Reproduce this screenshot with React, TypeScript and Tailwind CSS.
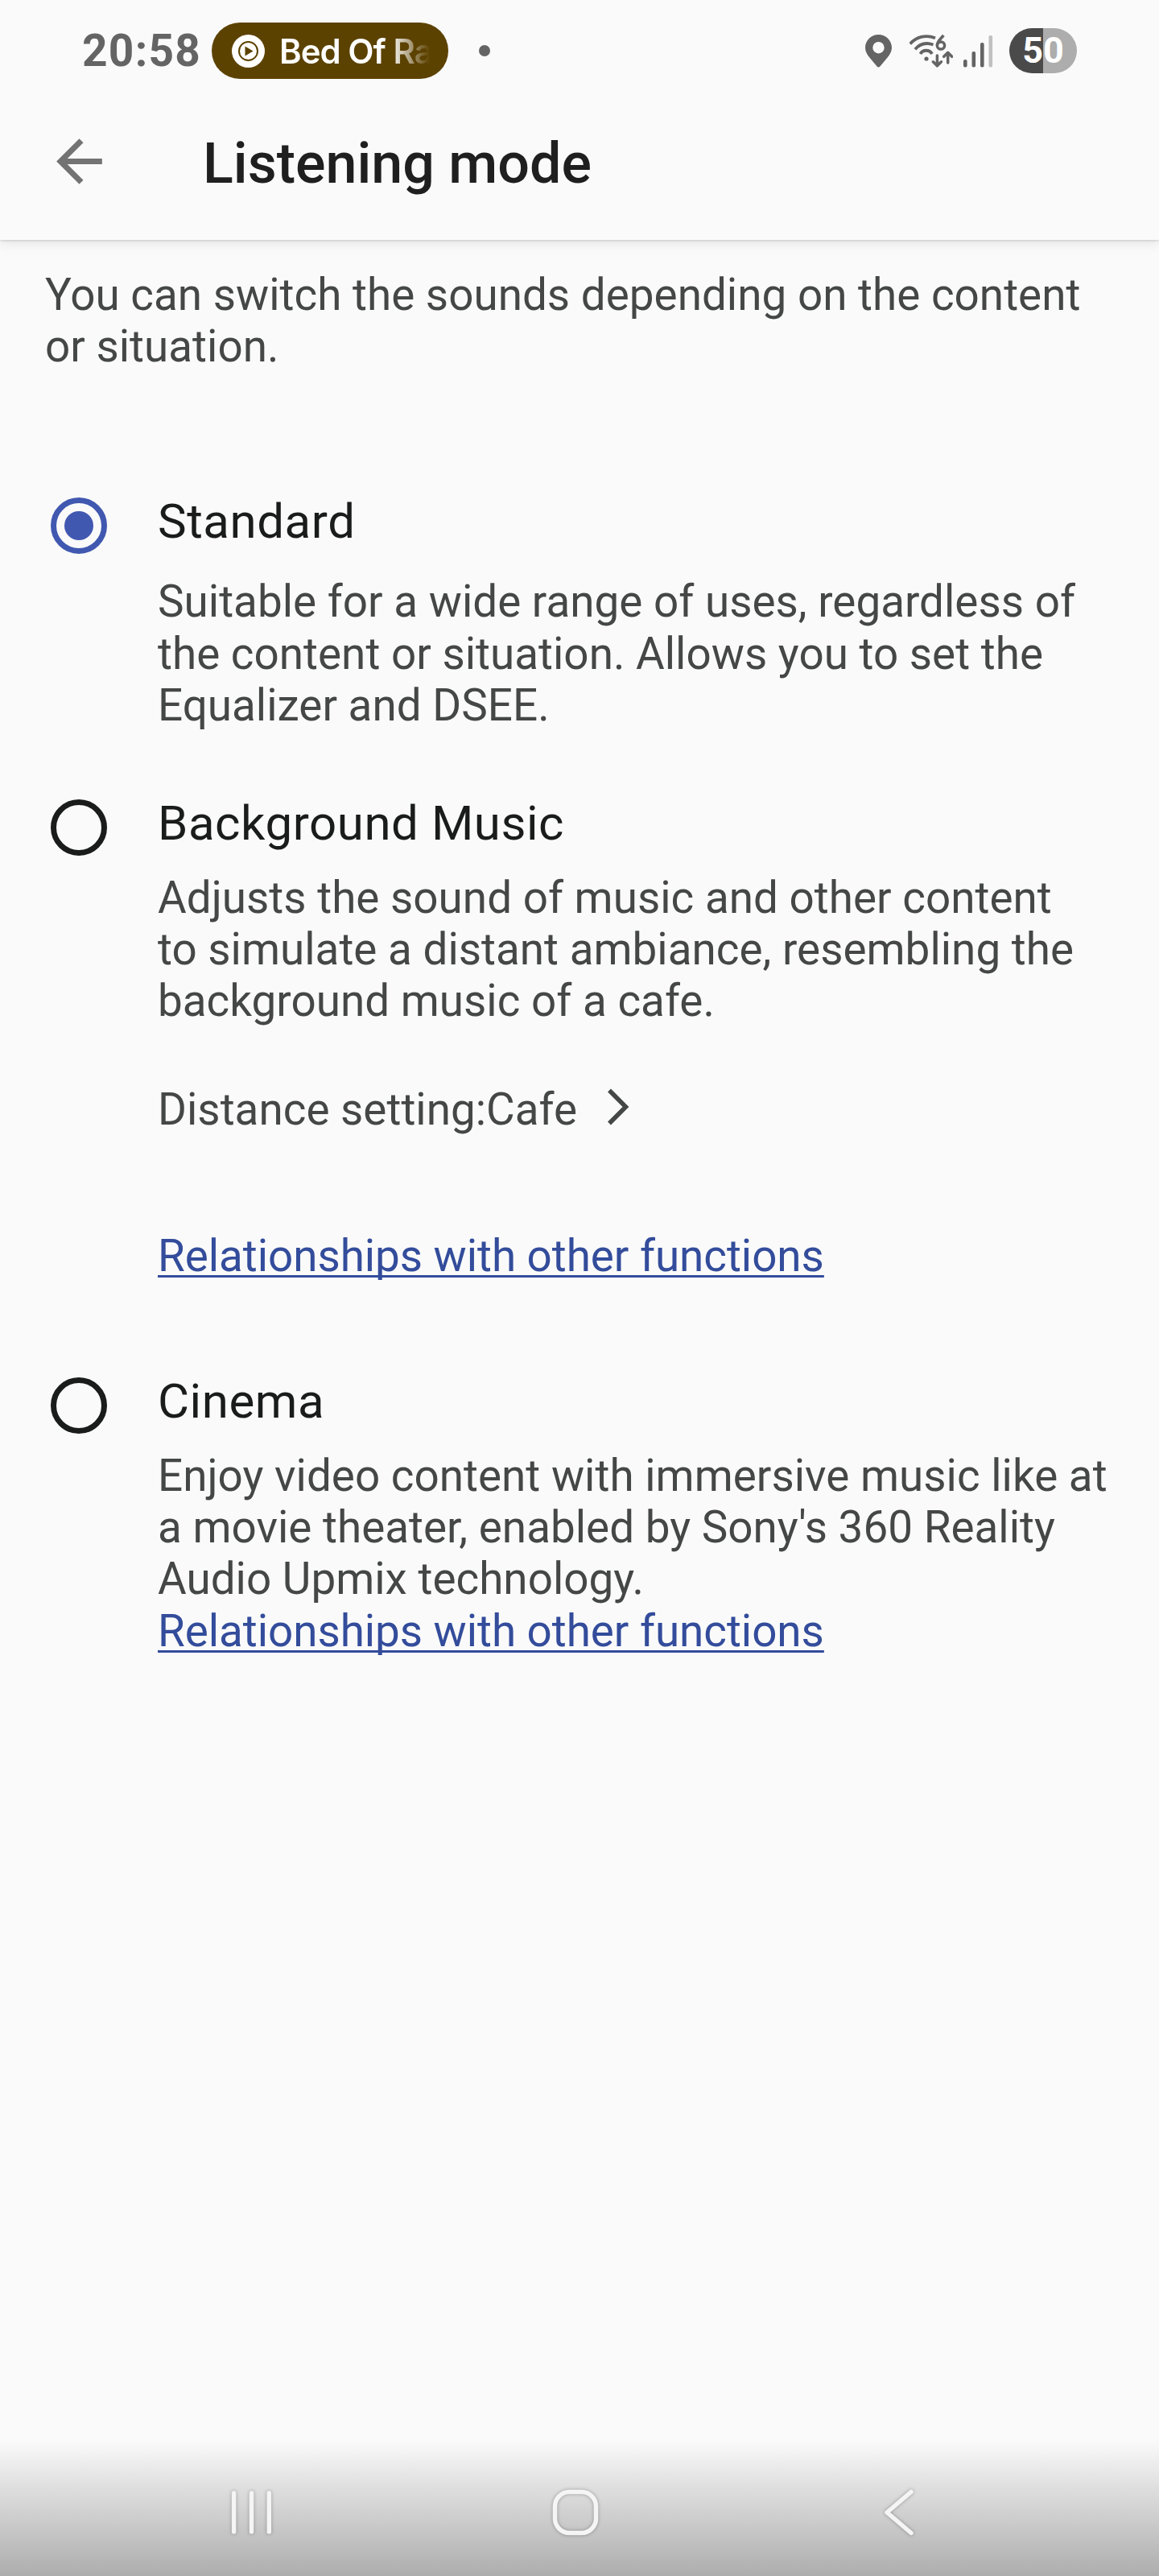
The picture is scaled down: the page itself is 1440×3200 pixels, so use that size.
import type { ReactNode } from "react";
import clsx from "clsx";

const StatusBar = () => {
  return (
    <div className="relative z-10 flex h-[126px] items-center bg-[#fafafa] pl-[102px] pr-[102px] font-['Inter',sans-serif]">
      <span className="w-[161px] whitespace-nowrap font-['Roboto',sans-serif] text-[55px] font-bold leading-none tracking-[1.3px] text-[#646464]">
        20:58
      </span>

      {/* Now playing chip */}
      <div className="flex h-[70px] w-[294px] items-center rounded-full bg-[#5c4200] pl-[25px]">
        <svg className="h-[41px] w-[41px] shrink-0" viewBox="0 0 41 41">
          <circle cx="20.5" cy="20.5" r="20.5" fill="#fff" />
          <circle cx="20.5" cy="20.5" r="11.5" fill="none" stroke="#5c4200" strokeWidth="2" />
          <path d="M16.5 14.5v12l10-6z" fill="#5c4200" />
        </svg>
        <span className="ml-[18px] whitespace-nowrap bg-linear-to-r from-white from-[72%] to-transparent to-[98%] bg-clip-text text-[42px] font-semibold tracking-[-1px] text-transparent">
          Bed Of Ra
        </span>
      </div>

      <div className="ml-[38px] h-[14px] w-[14px] rounded-full bg-[#646464]" />

      <div className="ml-auto flex items-center">
        <svg className="h-[41px] w-[33px]" viewBox="0 0 33 41">
          <path
            fillRule="evenodd"
            fill="#646464"
            d="M16.5 0C7.4 0 0 7.2 0 16.3c0 4.7 2.2 8.2 5.2 12L14.6 39.5c1 1.2 2.8 1.2 3.8 0L27.8 28.3c3-3.8 5.2-7.3 5.2-12C33 7.2 25.6 0 16.5 0Zm0 9a7.2 7.2 0 1 1 0 14.4 7.2 7.2 0 0 1 0-14.4Z"
          />
        </svg>

        <svg
          className="ml-[22px] h-[42px] w-[54px]"
          viewBox="0 0 54 42"
          fill="none"
          stroke="#646464"
          strokeWidth="3.8"
          strokeLinejoin="round"
        >
          <path d="M.8 12.6C8 4 20 .5 32 5.2" />
          <path d="M7 19.2C13 12 21 10.5 29.5 13.5" />
          <path d="M13.5 25C16.5 19.3 25 19.3 28 25" />
          <circle cx="21" cy="31" r="2.6" fill="#646464" stroke="none" />
          <path d="M42.3 1.8C39 6 34.4 9.5 34.4 14" strokeWidth="3.5" />
          <circle cx="39" cy="14.5" r="4.6" strokeWidth="3.5" />
          <path d="M34.4 27v12.5M29.4 34.8l5 5 5-5" strokeWidth="3.5" strokeLinecap="round" />
          <path d="M47.7 36V23.5M42.7 28.3l5-5 5 5" strokeWidth="3.5" strokeLinecap="round" />
        </svg>

        <svg className="ml-[13px] h-[41px] w-[37px]" viewBox="0 0 37 41">
          <rect x="0" y="31" width="4.6" height="9.5" rx="2" fill="#646464" />
          <rect x="10.5" y="21" width="4.6" height="19.5" rx="2" fill="#646464" />
          <rect x="21" y="10" width="4.6" height="30.5" rx="2" fill="#646464" />
          <rect x="31.5" y="1" width="4.6" height="39.5" rx="2" fill="#c0c0c0" />
        </svg>

        <div className="ml-[20px] flex h-[56px] w-[84px] items-center justify-center rounded-full bg-linear-to-r from-[#4a4a4a] from-50% to-[#adadad] to-50% font-['Roboto',sans-serif] text-[45px] font-bold text-white">
          50
        </div>
      </div>
    </div>
  );
};

const Header = () => {
  return (
    <header className="flex h-[172px] items-center pb-[23px] shadow-[0_1px_3px_rgba(0,0,0,0.16),0_5px_14px_rgba(0,0,0,0.08)]">
      <svg className="ml-[56px] h-[85px] w-[85px]" viewBox="0 0 24 24" fill="#737373">
        <path d="M20 11H7.83l5.59-5.59L12 4l-8 8 8 8 1.41-1.41L7.83 13H20v-2z" />
      </svg>
      <h1 className="ml-[111px] pt-[5px] text-[70px] font-medium leading-[82px] text-[#1f1f1f]">Listening mode</h1>
    </header>
  );
};

const Radio = ({ checked }: { checked?: boolean }) => {
  return (
    <div
      className={clsx(
        "mt-[5px] flex h-[70px] w-[70px] shrink-0 items-center justify-center rounded-full border-[7px]",
        checked ? "border-[#4058b0]" : "border-[#1a1c1c]"
      )}
    >
      {checked && <div className="h-[36px] w-[36px] rounded-full bg-[#4058b0]" />}
    </div>
  );
};

type OptionProps = {
  label: string;
  checked?: boolean;
  className?: string;
  children: ReactNode;
};

const Option = ({ label, checked, className, children }: OptionProps) => {
  return (
    <div className={clsx("flex pl-[63px]", className)}>
      <Radio checked={checked} />
      <div className="ml-[63px] whitespace-nowrap">
        <h2 className="text-[60px] leading-[70px] tracking-[0.55px] text-[#1a1c1c]">{label}</h2>
        {children}
      </div>
    </div>
  );
};

const RelationshipsLink = () => {
  return (
    <a className="tracking-[-0.04px] text-[#334c9b] underline decoration-[3px] underline-offset-[5px] [text-decoration-skip-ink:none]">
      Relationships with other functions
    </a>
  );
};

const NavBar = () => {
  return (
    <nav className="mt-auto flex h-[168px] items-center bg-linear-to-b from-[#fafafa] to-[#adadad] pt-[10px]">
      <svg
        className="ml-[280px] h-[70px] w-[66px] drop-shadow-[0_0_2px_rgba(0,0,0,0.3)]"
        viewBox="0 0 66 70"
        fill="none"
        stroke="#f5f5f5"
        strokeWidth="5.5"
        strokeLinecap="round"
      >
        <path d="M10.6 11v48M32.5 11v48M54.3 11v48" />
      </svg>
      <svg
        className="ml-[334px] h-[70px] w-[70px] drop-shadow-[0_0_2px_rgba(0,0,0,0.3)]"
        viewBox="0 0 70 70"
        fill="none"
        stroke="#f5f5f5"
        strokeWidth="5.5"
      >
        <rect x="9.5" y="9.5" width="51" height="51" rx="18" />
      </svg>
      <svg
        className="ml-[339px] h-[70px] w-[56px] drop-shadow-[0_0_2px_rgba(0,0,0,0.3)]"
        viewBox="0 0 56 70"
        fill="none"
        stroke="#f5f5f5"
        strokeWidth="5.5"
        strokeLinecap="round"
        strokeLinejoin="round"
      >
        <path d="M43 9.5L13 35l30 25.5" />
      </svg>
    </nav>
  );
};

const App = () => {
  return (
    <div className="flex h-[3200px] w-[1440px] flex-col overflow-hidden bg-[#fafafa] font-['Roboto',sans-serif]">
      <StatusBar />
      <Header />

      <main className="pt-[36px] text-[54.8px] leading-[64.2px] tracking-[0.02px] text-[#444746]">
        <p className="whitespace-nowrap pl-[56px]">
          You can switch the sounds depending on the content
          <br />
          or situation.
        </p>

        <Option label="Standard" checked className="mt-[151px]">
          <p className="mt-[32px]">
            Suitable for a wide range of uses, regardless of
            <br />
            the content or situation. Allows you to set the
            <br />
            Equalizer and DSEE.
          </p>
        </Option>

        <Option label="Background Music" className="mt-[80px]">
          <p className="mt-[25px]">
            Adjusts the sound of music and other content
            <br />
            to simulate a distant ambiance, resembling the
            <br />
            background music of a cafe.
          </p>
          <div className="mt-[70px] flex items-start">
            <span>Distance setting:Cafe</span>
            <svg
              className="ml-[36px] mt-[5px] h-[48px] w-[32px]"
              viewBox="0 0 32 48"
              fill="none"
              stroke="#444746"
              strokeWidth="5.5"
            >
              <path d="M4 3.5l20.5 20.5L4 44.5" />
            </svg>
          </div>
          <p className="mt-[118px]">
            <RelationshipsLink />
          </p>
        </Option>

        <Option label="Cinema" className="mt-[114px]">
          <p className="mt-[25px]">
            Enjoy video content with immersive music like at
            <br />
            a movie theater, enabled by Sony's 360 Reality
            <br />
            Audio Upmix technology.
            <br />
            <RelationshipsLink />
          </p>
        </Option>
      </main>

      <NavBar />
    </div>
  );
};

export default App;
